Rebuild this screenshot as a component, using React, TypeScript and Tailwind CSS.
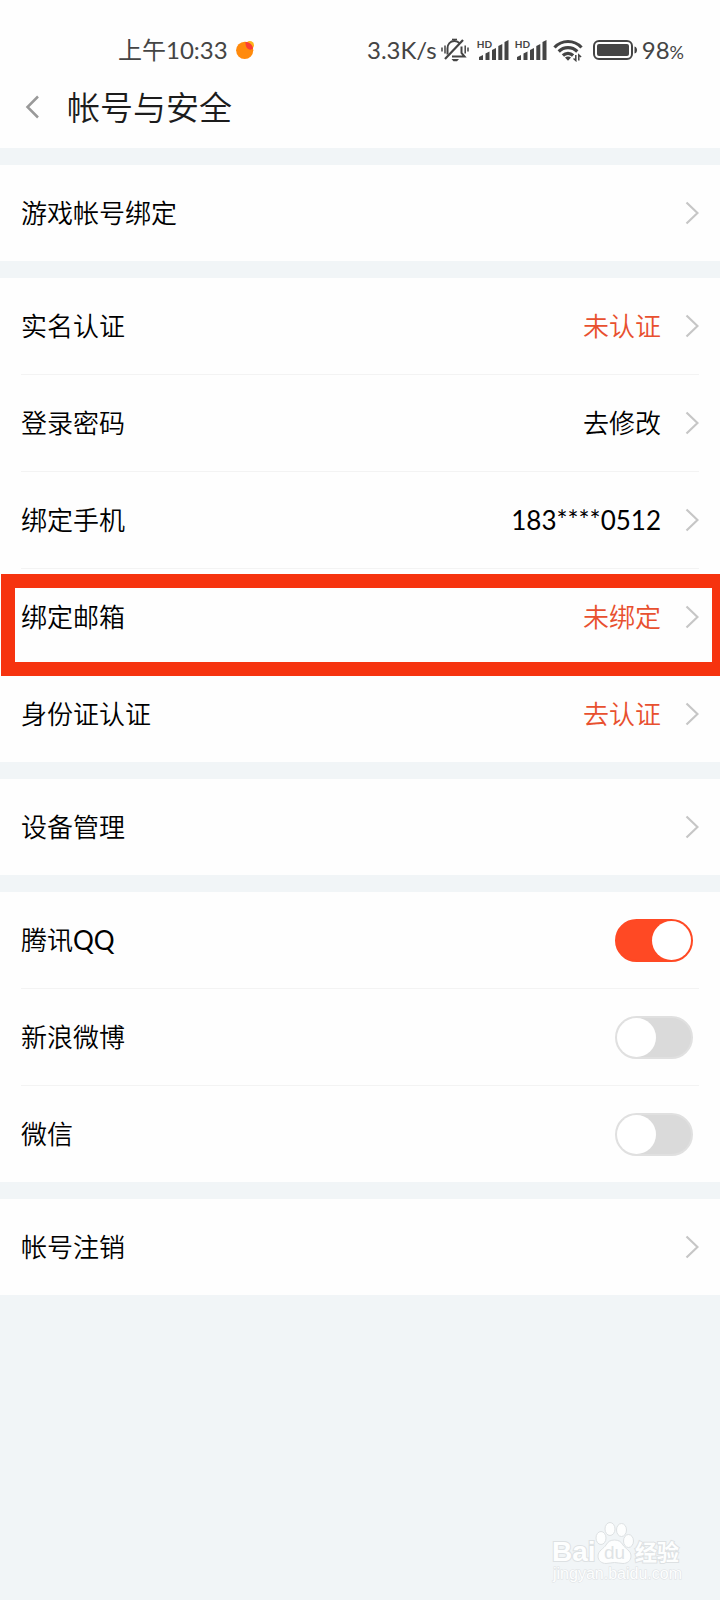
import React, { useState } from "react";

type LinkRow = {
  label: string;
  value?: string;
  accent?: boolean;
  marked?: boolean;
};

const accountRows: LinkRow[] = [
  { label: "实名认证", value: "未认证", accent: true },
  { label: "登录密码", value: "去修改" },
  { label: "绑定手机", value: "183****0512" },
  { label: "绑定邮箱", value: "未绑定", accent: true, marked: true },
  { label: "身份证认证", value: "去认证", accent: true },
];

const BellOff = () => (
  <svg width="28" height="24" viewBox="0 0 28 24" fill="none" stroke="#444" strokeWidth="2">
    <path d="M6.5 16.500V10.500c0-4.500 2.800-7.500 7-7.500 2 0 3.800.8 5 2.200" />
    <path d="M20.500 8.500v6.500l3 3.500H11" />
    <path d="M4 21L22 2" strokeWidth="2.200" />
    <path d="M11 1.500h5" strokeWidth="1.600" />
    <path d="M10.500 21h7.500l-2 2.300h-3.500z" fill="#444" stroke="none" />
    <path d="M1 9.500v4M4 7.500v8M24.200 7.500v8M27 9.500v4" strokeWidth="1.500" />
  </svg>
);

const Signal = () => (
  <span className="relative">
    <svg width="32" height="22" viewBox="0 0 32 22" fill="#444">
      <path d="M2 18l4-2V21H2zM8.500 14.500l4-2V21H8.500zM15 11l4-2V21H15zM21.300 7l4-2V21h-4zM27.500 3L31.500 1v20h-4z" />
    </svg>
    <span className="absolute left-0 top-0 text-[10px] font-bold leading-[10px]">HD</span>
  </span>
);

const Wifi = () => (
  <svg width="30" height="24" viewBox="0 0 30 24" fill="none" stroke="#444" strokeWidth="3.200">
    <path d="M1.500 9.500C9 1.500 21 1.500 28.500 9.500" />
    <path d="M5.700 13.500c5.200-5.200 13.400-5.200 18.600 0" />
    <path d="M9.900 17.500c2.900-2.900 7.300-2.900 10.200 0" />
    <path d="M12 19.500c1.500-1.500 4.500-1.500 6 0L15 22.700z" fill="#444" stroke="none" />
    <path d="M22.800 17v5.500l-2.300-2M25.800 22.500V17l2.300 2" strokeWidth="1.500" />
  </svg>
);

const Battery = () => (
  <svg width="45" height="20" viewBox="0 0 45 20" fill="#444">
    <rect x="1" y="1" width="38" height="18" rx="5" fill="none" stroke="#444" strokeWidth="2" />
    <rect x="4" y="4" width="32" height="12" rx="2" />
    <path d="M41.500 6.500c2 .5 2.500 2 2.500 3.500s-.5 3-2.500 3.500z" />
  </svg>
);

const Chevron = () => (
  <svg width="14" height="24" viewBox="0 0 14 24" fill="none" stroke="#c6c6c6" strokeWidth="2.200">
    <path d="M1.500 1.500L12.500 12 1.500 22.500" />
  </svg>
);

const StatusBar = () => (
  <div className="flex h-[70px] items-center justify-between pl-[118px] pr-9 pt-[30px] text-2xl font-normal leading-10 text-[#444]">
    <div className="flex items-center gap-2">
      <span>上午10:33</span>
      <svg width="18" height="18" viewBox="0 0 18 18">
        <circle cx="13.800" cy="4.200" r="4.200" fill="#fdb51c" />
        <circle cx="8.700" cy="9.300" r="8.600" fill="#ff8a0c" />
        <path d="M9.500.800a8.600 8.600 0 0 1 7.600 6.700c-3 2.800-8.100.500-7.600-6.700z" fill="#fb3c35" />
      </svg>
    </div>
    <div className="flex items-center gap-[6px]">
      <div className="flex items-center gap-1 pr-0.5">
        <span>3.3K/s</span>
        <BellOff />
      </div>
      <Signal />
      <Signal />
      <Wifi />
      <div className="flex items-center gap-1 pl-1">
        <Battery />
        <span>
          98<span className="text-lg">%</span>
        </span>
      </div>
    </div>
  </div>
);

const Section = ({ children }: { children: React.ReactNode }) => (
  <section className="bg-[#fefefe] px-[21px]">
    <ul className="divide-y divide-[#f3f3f3]">{children}</ul>
  </section>
);

const NavRow = ({ label, value, accent, marked }: LinkRow) => (
  <li>
    <div className={marked ? "relative -mx-[21px] px-[21px]" : ""}>
      <button type="button" className="flex h-24 w-full items-center justify-between text-left">
        <span>{label}</span>
        <span className="flex items-center gap-6">
          {value && (
            <span className={accent ? "text-[#e8502f]" : /\d/.test(value) ? "font-normal" : ""}>{value}</span>
          )}
          <Chevron />
        </span>
      </button>
      {marked && (
        <div className="pointer-events-none absolute -bottom-[11px] left-px right-0 top-[5px] border-[14px] border-r-8 border-[#f6330f]" />
      )}
    </div>
  </li>
);

type SwitchRowProps = {
  id: string;
  label: React.ReactNode;
  initial?: boolean;
};

const SwitchRow = ({ id, label, initial = false }: SwitchRowProps) => {
  const [checked, setChecked] = useState(initial);

  return (
    <li>
      <div className="flex h-24 items-center justify-between pr-1.5">
        <label htmlFor={id}>{label}</label>
        <input
          id={id}
          type="checkbox"
          role="switch"
          checked={checked}
          onChange={() => setChecked(!checked)}
          className="flex h-[43px] w-[78px] cursor-pointer appearance-none items-center rounded-full border-2 border-[#e0e0e0] bg-[#dadada] before:block before:size-[39px] before:rounded-full before:bg-white checked:justify-end checked:border-[#ff4924] checked:bg-[#ff4924]"
        />
      </div>
    </li>
  );
};

const Watermark = () => (
  <svg
    width="136"
    height="66"
    viewBox="0 0 136 66"
    fill="#fdfefe"
    stroke="#dde1e3"
    strokeWidth="1"
    className="font-['Liberation_Sans','Noto_Sans_CJK_SC',sans-serif] font-bold"
  >
    <text x="2" y="43" fontSize="28" paintOrder="stroke" strokeWidth="2">Bai</text>
    <ellipse cx="51" cy="20" rx="5" ry="6.500" />
    <ellipse cx="60" cy="11" rx="5" ry="6.500" />
    <ellipse cx="71.500" cy="12" rx="5" ry="6.500" />
    <ellipse cx="78.500" cy="23" rx="5" ry="6.500" />
    <path d="M64.500 22c4 0 6.500 1.500 8.500 5 2 3.500 8 5.500 8 11 0 5-4 7.500-8 7.500-3 0-5.500-1-8.500-1s-5.500 1-8.500 1c-4 0-8-2.500-8-7.500 0-5.500 6-7.500 8-11 2-3.500 4.500-5 8.500-5z" />
    <text x="54" y="41" fontSize="19" fill="#dfe3e5" stroke="none" fontWeight="400">du</text>
    <text x="85" y="42" fontSize="22" paintOrder="stroke" strokeWidth="2">经验</text>
    <text x="3" y="61" fontSize="16" fontWeight="400" paintOrder="stroke">jingyan.baidu.com</text>
  </svg>
);

export default function App() {
  return (
    <div className="flex min-h-screen flex-col bg-[#f1f5f7] font-[Lato,'Noto_Sans_CJK_SC',sans-serif] text-[26px] font-[350] leading-10 text-black">
      <header className="bg-[#fefefe]">
        <StatusBar />
        <div className="flex h-[78px] items-center gap-7 pb-1 pl-[25px]">
          <button type="button" aria-label="返回">
            <svg width="14" height="24" viewBox="0 0 14 24" fill="none" stroke="#999" strokeWidth="2.500">
              <path d="M13 1.500L2.500 12 13 22.500" />
            </svg>
          </button>
          <h1 className="text-[33px] text-[#1c1c1c]">帐号与安全</h1>
        </div>
      </header>

      <main className="flex flex-col gap-[17px] pt-[17px]">
        <Section>
          <NavRow label="游戏帐号绑定" />
        </Section>
        <Section>
          {accountRows.map((row) => (
            <NavRow key={row.label} {...row} />
          ))}
        </Section>
        <Section>
          <NavRow label="设备管理" />
        </Section>
        <Section>
          <SwitchRow
            id="qq"
            label={
              <>
                腾讯<span className="font-normal">QQ</span>
              </>
            }
            initial
          />
          <SwitchRow id="weibo" label="新浪微博" />
          <SwitchRow id="wechat" label="微信" />
        </Section>
        <Section>
          <NavRow label="帐号注销" />
        </Section>
      </main>

      <footer className="mt-auto flex justify-end pb-4 pr-[34px]">
        <Watermark />
      </footer>
    </div>
  );
}
